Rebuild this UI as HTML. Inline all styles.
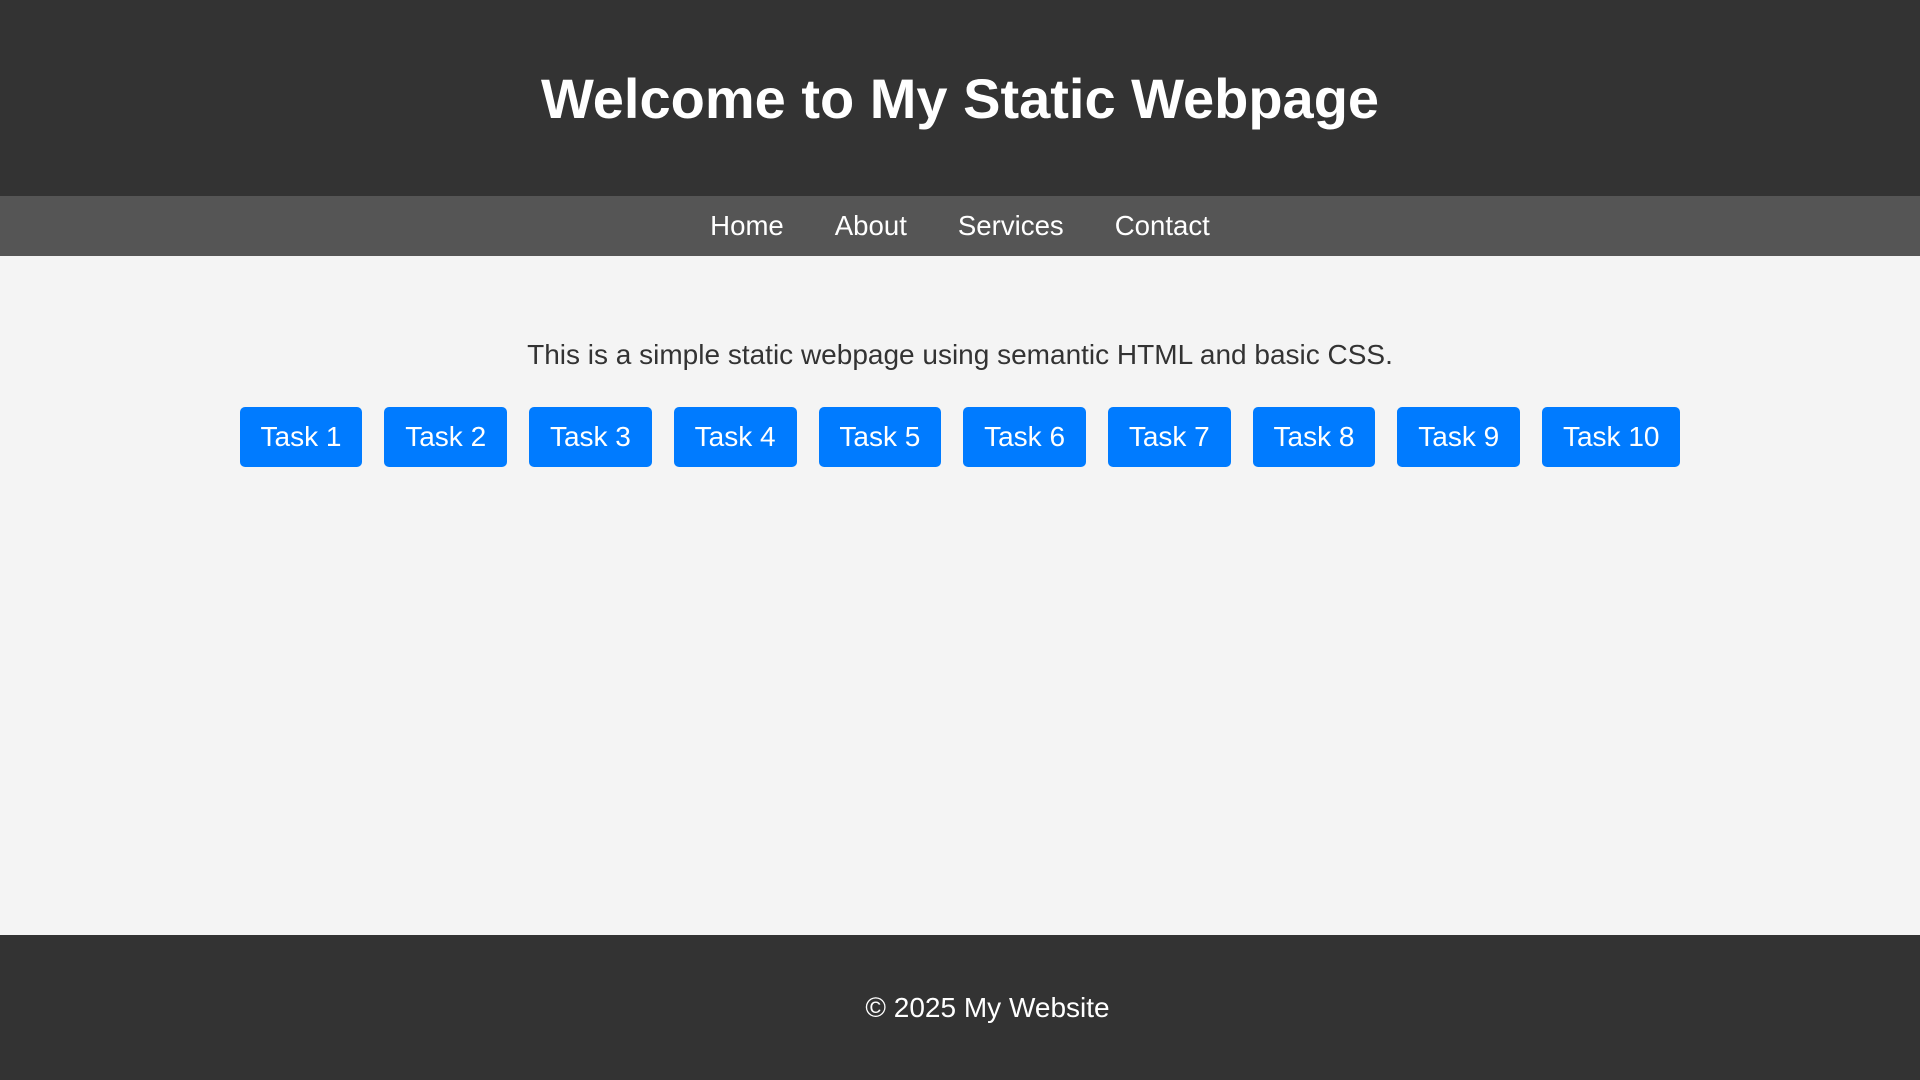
<!DOCTYPE html>
<html><head><meta charset="utf-8"><style>
*{margin:0;padding:0;box-sizing:border-box}
body{width:1920px;height:1080px;background:#f4f4f4;font-family:"Liberation Sans",Arial,sans-serif;font-size:28px;position:relative;overflow:hidden}
header{position:absolute;top:0;left:0;width:1920px;height:198px;background:#333;color:#fff;display:flex;align-items:center;justify-content:center}
h1{font-size:56px;font-weight:bold;line-height:1}
nav{position:absolute;top:196px;left:0;width:1920px;height:60px;background:#555;display:flex;align-items:center;justify-content:center;gap:0}
nav a{color:#fff;text-decoration:none;margin:0 25.5px;line-height:1;font-size:27.6px}
p{position:absolute;top:339px;left:0;width:1920px;text-align:center;color:#333;line-height:32px}
.btns{position:absolute;top:407px;left:0;width:1920px;display:flex;justify-content:center;gap:22px}
.btns span{background:#007bff;color:#fff;height:60px;padding:0 20.9px;border-radius:5px;display:flex;align-items:center;flex-shrink:0}
footer{position:absolute;top:935px;left:0;width:1920px;height:145px;background:#333;color:#fff;display:flex;align-items:center;justify-content:center;padding-left:55px}
</style></head><body>
<header><h1>Welcome to My Static Webpage</h1></header>
<nav><a>Home</a><a>About</a><a>Services</a><a>Contact</a></nav>
<p>This is a simple static webpage using semantic HTML and basic CSS.</p>
<div class="btns"><span>Task 1</span><span>Task 2</span><span>Task 3</span><span>Task 4</span><span>Task 5</span><span>Task 6</span><span>Task 7</span><span>Task 8</span><span>Task 9</span><span>Task 10</span></div>
<footer>© 2025 My Website</footer>
</body></html>
